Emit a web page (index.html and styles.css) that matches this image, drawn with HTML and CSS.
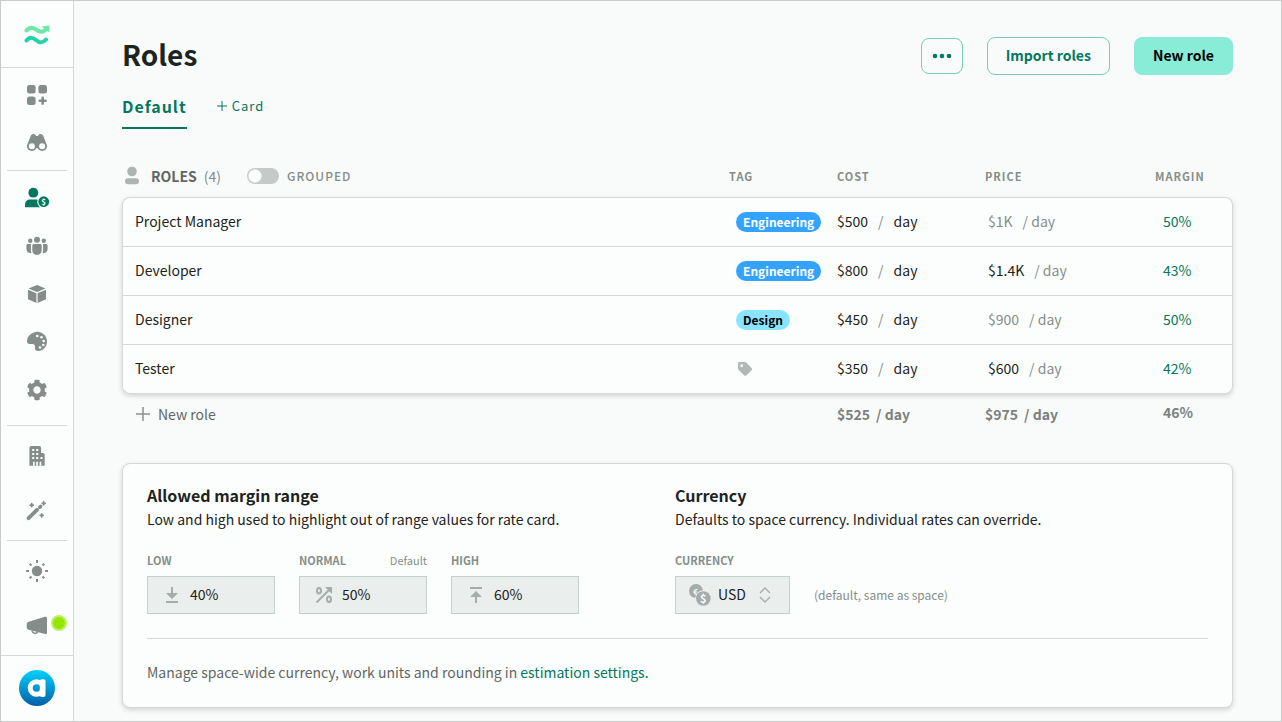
FILE: index.html
```html
<!DOCTYPE html>
<html lang="en">
  <head>
    <meta charset="utf-8">
    <title>Roles</title>
    <link rel="stylesheet" href="styles.css">
  </head>
  <body>
    <nav class="sidebar">
      <a class="logo" href="#" aria-label="Home">
        <svg width="26" height="24" viewBox="0 0 26 24" fill="none" stroke-width="4" stroke-linecap="round">
          <path d="M2.500 7.500C5.500 4 8.500 4 12 6.500S19 10 22 6.500" stroke="#6ee7a8"/>
          <path d="M17.500 3.500L25.500 2.500V9.500z" fill="#6ee7a8"/>
          <path d="M2.500 17.500C5.500 13.500 8.500 14 12 17S18.500 20.500 22 16.500" stroke="#22d3a9"/>
        </svg>
      </a>
      <div class="group">
        <a href="#" aria-label="Dashboard">
          <svg class="icon" viewBox="0 0 24 24"><rect x="2" y="2" width="8.600" height="8.600" rx="2.500"/><rect x="13.400" y="2" width="8.600" height="8.600" rx="2.500"/><rect x="2" y="13.400" width="8.600" height="8.600" rx="2.500"/><path d="M17.700 14.800v5.800M14.800 17.700h5.800" stroke="currentColor" stroke-width="2.600" stroke-linecap="round"/></svg>
        </a>
        <a href="#" aria-label="Explore">
          <svg class="icon" viewBox="0 0 24 24"><path d="M5.500 5.500C5.800 4 7 3 8.500 3S11 4 11 5h2c0-1 1-2 2.500-2s2.700 1 3 2.500L21.500 13c.3.700.5 1.400.5 2.200a4.900 4.900 0 0 1-9.300 2h-1.400a4.900 4.900 0 0 1-9.300-2c0-.8.2-1.500.5-2.200z"/><circle cx="6.900" cy="15.200" r="3" fill="#fcfefd"/><circle cx="17.100" cy="15.200" r="3" fill="#fcfefd"/></svg>
        </a>
      </div>
      <div class="group wide-end">
        <a class="active" href="#" aria-label="Roles">
          <svg class="icon" viewBox="0 0 24 24"><circle cx="8.300" cy="6.700" r="4.900"/><path d="M0 21.300V19c0-3.500 2-5.500 5-5.500h6.600c1 0 1.700.2 2.300.5l1.600 7.300z"/><circle cx="18.700" cy="15.700" r="6.500" fill="#fcfefd"/><circle cx="18.700" cy="15.700" r="5.400"/><text class="coin" x="18.700" y="18.900" text-anchor="middle">$</text></svg>
        </a>
        <a href="#" aria-label="Team">
          <svg class="icon" viewBox="0 0 24 24"><circle cx="12" cy="5.700" r="3"/><circle cx="5.200" cy="6.700" r="2.200"/><circle cx="18.800" cy="6.700" r="2.200"/><path d="M9 10h6c1 0 1.700.7 1.700 1.700v4.600c0 2.600-2 4.700-4.700 4.700s-4.700-2.100-4.700-4.700v-4.600C7.300 10.700 8 10 9 10zM3 10h3.300c-.3.500-.4 1-.4 1.700v4.600c0 1 .2 2 .6 2.900-2.900 0-5.100-1.500-5.100-4.500v-3C1.400 10.700 2 10 3 10zM21 10h-3.300c.3.500.4 1 .4 1.700v4.600c0 1-.2 2-.6 2.900 2.900 0 5.100-1.500 5.100-4.500v-3c0-1-.6-1.700-1.600-1.700z"/></svg>
        </a>
        <a href="#" aria-label="Products">
          <svg class="icon" viewBox="0 0 24 24"><path d="M12 3l8.500 3.400L12 10 3.500 6.400zM3 7.800l8.400 3.500V21L3 17.200zM21 7.800l-8.400 3.500V21l8.400-3.800z"/></svg>
        </a>
        <a href="#" aria-label="Themes">
          <svg class="icon" viewBox="0 0 24 24"><path d="M14.200 2C9.500 1 2 4.800 2 11.500c0 1.600 1.100 2.500 2.500 2.500h2.800c2 0 3.200 1.700 2.600 3.600-.5 2 1.200 3.400 3.300 3.400 5 0 8.800-4.300 8.800-9.500 0-4.800-3.300-8.600-7.800-9.500z"/><g fill="#fcfefd"><circle cx="12.300" cy="6" r="1.300"/><circle cx="16.500" cy="7.200" r="1.300"/><circle cx="18.700" cy="11" r="1.300"/><circle cx="18.300" cy="15" r="1.300"/><circle cx="15" cy="17.500" r="1.300"/></g></svg>
        </a>
        <a href="#" aria-label="Settings">
          <svg class="icon" viewBox="-37 -37 586 586"><path d="M487.400 315.700l-42.600-24.600c4.300-23.200 4.300-47 0-70.200l42.600-24.600c4.900-2.800 7.100-8.600 5.500-14-11.100-35.600-30-67.800-54.700-94.600-3.800-4.100-10-5.100-14.800-2.300L380.800 110c-17.900-15.400-38.500-27.300-60.800-35.100V25.800c0-5.600-3.900-10.500-9.400-11.700-36.700-8.200-74.300-7.800-109.200 0-5.500 1.200-9.400 6.100-9.400 11.700V75c-22.200 7.900-42.800 19.800-60.800 35.100L88.700 85.500c-4.900-2.800-11-1.900-14.800 2.300-24.700 26.700-43.600 58.900-54.700 94.600-1.700 5.400.6 11.200 5.500 14L67.300 221c-4.300 23.200-4.300 47 0 70.200l-42.600 24.600c-4.900 2.800-7.100 8.600-5.500 14 11.100 35.600 30 67.800 54.700 94.600 3.800 4.100 10 5.100 14.800 2.300l42.600-24.600c17.900 15.400 38.500 27.300 60.800 35.100v49.200c0 5.600 3.900 10.500 9.400 11.700 36.700 8.200 74.300 7.800 109.200 0 5.500-1.200 9.400-6.100 9.400-11.700v-49.200c22.200-7.900 42.800-19.800 60.800-35.100l42.600 24.600c4.900 2.800 11 1.900 14.800-2.300 24.700-26.700 43.600-58.900 54.700-94.600 1.500-5.500-.7-11.300-5.600-14.100zM256 346c-49.700 0-90-40.300-90-90s40.300-90 90-90 90 40.300 90 90-40.300 90-90 90z"/></svg>
        </a>
      </div>
      <div class="group tall">
        <a href="#" aria-label="Space">
          <svg class="icon" viewBox="0 0 24 24"><path d="M6.500 2h7.600c1.200 0 2 .8 2 2v5h1.600c1.200 0 2 .8 2 2v10.700H4.400V4c0-1.200.9-2 2.100-2z"/><path fill="#fcfefd" d="M7.200 5h2v2h-2zM11.200 5h2v2h-2zM7.200 9h2v2h-2zM11.200 9h2v2h-2zM7.200 13h2v2h-2zM11.200 13h2v2h-2zM15.500 13h2v2h-2zM8 17.700h1.700v4H8zM11.200 17.700h1.700v4h-1.700zM14.600 17.700h1.700v4h-1.700z"/></svg>
        </a>
        <a href="#" aria-label="Automations">
          <svg class="icon" viewBox="0 0 24 24" stroke="currentColor" stroke-linecap="round"><path d="M3.600 19.200L12 10.800" stroke-width="3.800"/><path d="M14.800 8.200l.8-.8" stroke-width="3.600"/><path d="M6.700 4.700v3M5.200 6.200h3M18.700 2.800v3M17.200 4.300h3M16.700 14.800v3M15.200 16.300h3" stroke-width="1.800"/></svg>
        </a>
      </div>
      <div class="group tall full">
        <a href="#" aria-label="Light theme">
          <svg class="icon" viewBox="0 0 24 24"><circle cx="12" cy="12" r="5.200"/><path d="M12 1v3M12 20v3M1 12h3M20 12h3M4.700 4.700l1.800 1.800M17.500 17.500l1.800 1.800M4.700 19.300l1.800-1.800M17.500 6.500l1.800-1.800" stroke="currentColor" stroke-width="2"/></svg>
        </a>
        <a class="news" href="#" aria-label="News">
          <svg class="icon" viewBox="0 0 24 24"><path d="M20 2.800c1.200-.3 2 .2 2 1.300v14.600c0 1-.8 1.500-2 1.200L3.700 15.700c-2-.5-2-1.800-2-2.900v-2.500c0-1 .3-2 2-2.500z"/><path d="M7 16.500c.3 3.300 4.800 3.800 5.700 1.300" fill="none" stroke="currentColor" stroke-width="1.500"/></svg>
          <span class="dot"></span>
        </a>
      </div>
      <a class="avatar" href="#" aria-label="Account">
        <svg width="36" height="36" viewBox="0 0 36 36">
          <defs><linearGradient id="blue" x1="0" y1="0" x2="0" y2="1"><stop offset="0" stop-color="#00d2fb"/><stop offset="1" stop-color="#005ea9"/></linearGradient></defs>
          <circle cx="18" cy="18" r="18" fill="url(#blue)"/>
          <circle cx="17.500" cy="18" r="6.300" fill="none" stroke="#fff" stroke-width="5"/>
          <rect x="20.800" y="9.300" width="5.700" height="17.700" rx="2" fill="#fff"/>
        </svg>
      </a>
    </nav>

    <main>
      <header class="page-header">
        <h1>Roles</h1>
        <button class="btn more" type="button" aria-label="More"><svg width="20" height="6" viewBox="0 0 20 6" fill="currentColor"><circle cx="3" cy="3" r="2.300"/><circle cx="10" cy="3" r="2.300"/><circle cx="17" cy="3" r="2.300"/></svg></button>
        <button class="btn" type="button">Import roles</button>
        <button class="btn primary" type="button">New role</button>
      </header>
      <div class="tabs">
        <a class="tab current" href="#">Default</a>
        <a class="tab add" href="#"><svg width="10" height="10" viewBox="0 0 10 10" stroke="currentColor"><path d="M5 0v10M0 5h10"/></svg>Card</a>
      </div>

      <table class="roles">
        <thead>
          <tr>
            <th>
              <div class="roles-title">
                <svg width="16" height="20" viewBox="0 0 16 20" fill="#aeb4b1"><circle cx="8" cy="5.500" r="4.800"/><rect x="1" y="12.300" width="14" height="6" rx="3"/></svg>
                <span>ROLES</span>
                <span class="count">(4)</span>
                <input class="switch" type="checkbox" id="grouped">
                <label for="grouped">GROUPED</label>
              </div>
            </th>
            <th class="tag-col">TAG</th>
            <th class="cost-col">COST</th>
            <th class="price-col">PRICE</th>
            <th class="margin-col">MARGIN</th>
          </tr>
        </thead>
        <tbody>
          <tr>
            <td>Project Manager</td>
            <td><span class="tag">Engineering</span></td>
            <td><div class="rate">$500 <i>/</i> day</div></td>
            <td><div class="rate price soft">$1K <span>/ day</span></div></td>
            <td>50%</td>
          </tr>
          <tr>
            <td>Developer</td>
            <td><span class="tag">Engineering</span></td>
            <td><div class="rate">$800 <i>/</i> day</div></td>
            <td><div class="rate price">$1.4K <span>/ day</span></div></td>
            <td>43%</td>
          </tr>
          <tr>
            <td>Designer</td>
            <td><span class="tag design">Design</span></td>
            <td><div class="rate">$450 <i>/</i> day</div></td>
            <td><div class="rate price soft">$900 <span>/ day</span></div></td>
            <td>50%</td>
          </tr>
          <tr>
            <td>Tester</td>
            <td><svg class="no-tag" width="18" height="16" viewBox="0 0 18 16"><path d="M3.500 1h5.300c.5 0 1 .2 1.400.6l5.300 5.300c.7.700.7 1.700 0 2.400l-5 5c-.7.700-1.700.7-2.400 0L2.600 9C2.200 8.600 2 8.100 2 7.600V2.500C2 1.700 2.700 1 3.500 1z" fill="#b3b8b6"/><circle cx="5.700" cy="4.700" r="1.400" fill="#fcfefd"/></svg></td>
            <td><div class="rate">$350 <i>/</i> day</div></td>
            <td><div class="rate price">$600 <span>/ day</span></div></td>
            <td>42%</td>
          </tr>
        </tbody>
        <tfoot>
          <tr>
            <td><button class="new-role" type="button"><svg width="14" height="14" viewBox="0 0 14 14" stroke="#8b918e" stroke-width="1.500"><path d="M7 0v14M0 7h14"/></svg>New role</button></td>
            <td></td>
            <td><div class="rate total">$525 <span>/ day</span></div></td>
            <td><div class="rate total">$975 <span>/ day</span></div></td>
            <td>46%</td>
          </tr>
        </tfoot>
      </table>

      <section class="settings">
        <div class="columns">
          <div>
            <h2>Allowed margin range</h2>
            <p>Low and high used to highlight out of range values for rate card.</p>
            <div class="fields">
              <div class="field">
                <div class="caption"><label for="low">LOW</label></div>
                <div class="box">
                  <svg width="24" height="20" viewBox="0 0 24 20" fill="#a6acaa"><path d="M11 2h2v6h5l-6 6-6-6h5zM6 16h12v2H6z"/></svg>
                  <input type="text" id="low" value="40%" readonly>
                </div>
              </div>
              <div class="field">
                <div class="caption"><label for="normal">NORMAL</label><span>Default</span></div>
                <div class="box">
                  <svg width="24" height="20" viewBox="0 0 24 20" fill="none" stroke="#a6acaa" stroke-width="2"><ellipse cx="7" cy="5.800" rx="2" ry="2.800"/><ellipse cx="17" cy="14.200" rx="2" ry="2.800"/><path d="M4.500 17.500L17 5"/><path d="M13 2h7v7z" fill="#a6acaa" stroke="none"/></svg>
                  <input type="text" id="normal" value="50%" readonly>
                </div>
              </div>
              <div class="field">
                <div class="caption"><label for="high">HIGH</label></div>
                <div class="box">
                  <svg width="24" height="20" viewBox="0 0 24 20" fill="#a6acaa"><path d="M6 2h12v2H6zM11 18h2v-6h5l-6-6-6 6h5z"/></svg>
                  <input type="text" id="high" value="60%" readonly>
                </div>
              </div>
            </div>
          </div>
          <div>
            <h2>Currency</h2>
            <p>Defaults to space currency. Individual rates can override.</p>
            <div class="caption"><label for="currency">CURRENCY</label></div>
            <div class="currency">
              <div class="box">
                <svg width="24" height="24" viewBox="0 0 24 24" fill="#a6acaa"><circle cx="8" cy="8" r="7"/><text class="coin euro" x="7.500" y="11.500" text-anchor="middle">€</text><circle cx="15.300" cy="15.500" r="8.200" fill="#eaeeec"/><circle cx="15.300" cy="15.500" r="7.300"/><text class="coin usd" x="15.300" y="19.500" text-anchor="middle">$</text></svg>
                <select id="currency"><option>USD</option></select>
                <svg width="12" height="16" viewBox="0 0 12 16" fill="none" stroke="#a6acaa" stroke-width="1.300"><path d="M1 6l5-5 5 5M1 10l5 5 5-5"/></svg>
              </div>
              <span class="hint">(default, same as space)</span>
            </div>
          </div>
        </div>
        <p class="note">Manage space-wide currency, work units and rounding in <a href="#">estimation settings.</a></p>
      </section>
    </main>
  </body>
</html>
```

FILE: styles.css
```css
* {
  box-sizing: border-box;
}
body {
  margin: 0;
  display: flex;
  min-height: 100vh;
  border: 1px solid #c9cbca;
  background-color: #f8fbfa;
  color: #1d2321;
  font: 14px/24px "Noto Sans CJK SC", "Noto Sans", sans-serif;
}
a {
  color: #04775f;
  text-decoration: none;
}
h1, h2, p {
  margin: 0;
}
button, input, select {
  font: inherit;
  color: inherit;
}
svg {
  flex: none;
}

/* sidebar */
.sidebar {
  flex: none;
  width: 73px;
  background-color: #fcfefd;
  border-right: 1px solid #d5d8d7;
}
.sidebar a {
  display: flex;
  align-items: center;
  justify-content: center;
  height: 48px;
  color: #858d8a;
}
.sidebar .logo {
  height: 67px;
  padding-top: 2px;
  border-bottom: 1px solid #d5d8d7;
}
.group {
  margin: 0 6px;
  padding: 3px 0;
  border-bottom: 1px solid #d5d8d7;
}
.wide-end {
  padding-bottom: 11px;
}
.tall {
  padding: 2px 0;
}
.sidebar .tall a {
  height: 55px;
}
.full {
  margin: 0;
}
.sidebar .active {
  color: #04775f;
}
.sidebar .avatar {
  height: 64px;
}
.icon {
  width: 24px;
  height: 24px;
  fill: currentColor;
}
.coin {
  fill: #fcfefd;
  font: bold 8px/8px "Noto Sans CJK SC", sans-serif;
}
.news {
  position: relative;
}
.dot {
  position: absolute;
  top: 17px;
  right: 6px;
  width: 16px;
  height: 16px;
  border: 2px solid #bdf06a;
  border-radius: 50%;
  background-color: #97e600;
}

/* page */
main {
  flex: 1;
  min-width: 0;
  padding: 36px 48px 13px;
}
.page-header {
  display: flex;
  align-items: center;
  gap: 24px;
}
h1 {
  flex: 1;
  padding-bottom: 4px;
  font-size: 28px;
  line-height: 34px;
  font-weight: 600;
}
.btn {
  height: 38px;
  padding: 0 18px 2px;
  border: 1px solid #76cdb7;
  border-radius: 8px;
  background: none;
  color: #04775f;
  font-weight: 600;
}
.more {
  display: flex;
  align-items: center;
  height: 36px;
  padding: 0 10px;
}
.primary {
  border-color: #88ecd6;
  background-color: #88ecd6;
  color: #000;
}
.tabs {
  display: flex;
  gap: 30px;
  margin-top: 19px;
}
.tab {
  display: flex;
  align-items: center;
  padding-bottom: 9px;
  border-bottom: 2px solid transparent;
  letter-spacing: 1px;
}
.current {
  border-color: #04775f;
  font-size: 16px;
  font-weight: 600;
}
.add {
  gap: 5px;
  font-size: 13px;
}

/* roles */
.roles {
  width: 100%;
  margin-top: 28px;
  border-spacing: 0;
  table-layout: fixed;
}
.roles th {
  height: 40px;
  padding: 0 0 2px;
  color: #858d8a;
  font-size: 11px;
  font-weight: bold;
  letter-spacing: 1px;
  text-align: left;
}
.tag-col {
  width: 108px;
}
.cost-col {
  width: 148px;
}
.price-col {
  width: 170px;
}
.margin-col {
  width: 78px;
}
.roles-title {
  display: flex;
  align-items: center;
  padding-left: 2px;
  color: #616664;
  font-size: 14px;
  letter-spacing: 0;
}
.roles-title svg {
  margin-right: 11px;
}
.count {
  margin-left: 7px;
  color: #858d8a;
  font-weight: normal;
}
.roles-title label {
  color: #858d8a;
  font-size: 12px;
  font-weight: 500;
  letter-spacing: 1px;
}
.switch {
  appearance: none;
  width: 32px;
  height: 16px;
  margin: 0 8px 0 26px;
  border-radius: 8px;
  background: radial-gradient(circle at 8px 8px, #fcfefd 6px, #c5c9c7 7px);
}
.roles tbody {
  border-radius: 8px;
  box-shadow: 0 2px 5px rgba(0, 0, 0, 0.16);
}
.roles tbody td {
  height: 49px;
  padding: 0 0 2px;
  border-top: 1px solid #d5d8d7;
  background-color: #fcfefd;
}
.roles tbody td:first-child {
  padding-left: 12px;
  border-left: 1px solid #d5d8d7;
}
.roles tbody td:nth-child(2) {
  padding: 0 0 0 7px;
}
.roles tbody td:last-child {
  padding-left: 8px;
  border-right: 1px solid #d5d8d7;
  color: #04775f;
}
.roles tbody tr:last-child td {
  height: 50px;
  border-bottom: 1px solid #d5d8d7;
}
.roles tbody tr:first-child td:first-child {
  border-top-left-radius: 8px;
}
.roles tbody tr:first-child td:last-child {
  border-top-right-radius: 8px;
}
.roles tbody tr:last-child td:first-child {
  border-bottom-left-radius: 8px;
}
.roles tbody tr:last-child td:last-child {
  border-bottom-right-radius: 8px;
}
.tag {
  display: table;
  padding: 0 7px;
  border-radius: 10px;
  background-color: #33a3ff;
  color: #fff;
  font-size: 12px;
  line-height: 20px;
  font-weight: 600;
}
.design {
  background-color: #88e4ff;
  color: #000;
}
.no-tag {
  display: block;
}
.rate {
  display: flex;
  gap: 10px;
}
.rate i {
  color: #858d8a;
  font-style: normal;
}
.price {
  padding-left: 3px;
}
.price span, .soft {
  color: #858d8a;
}
.total {
  gap: 6px;
}
.roles tfoot td {
  height: 42px;
  padding: 0 0 2px;
  color: #7a817e;
  font-weight: bold;
}
.roles tfoot td:last-child {
  padding: 0 0 6px 8px;
}
.new-role {
  display: flex;
  align-items: center;
  gap: 8px;
  padding: 0 0 0 14px;
  border: none;
  background: none;
  color: #616664;
  font-weight: normal;
}

/* settings card */
.settings {
  margin-top: 27px;
  padding: 19px 24px 23px;
  border: 1px solid #d5d8d7;
  border-radius: 8px;
  background-color: #fcfefd;
  box-shadow: 0 2px 5px rgba(0, 0, 0, 0.16);
}
.columns {
  display: grid;
  grid-template-columns: 480px 1fr;
  gap: 48px;
  padding-bottom: 24px;
  border-bottom: 1px solid #d5d8d7;
}
h2 {
  font-size: 16px;
  line-height: 24px;
  font-weight: 600;
}
.fields {
  display: flex;
  gap: 24px;
}
.field {
  width: 128px;
}
.caption {
  display: flex;
  justify-content: space-between;
  margin: 20px 0 7px;
  color: #858d8a;
  font-size: 11px;
  line-height: 18px;
}
.caption label {
  font-weight: bold;
}
.box {
  display: flex;
  align-items: center;
  gap: 6px;
  height: 38px;
  padding: 0 12px;
  border: 1px solid #c6d1ce;
  background-color: #eaeeec;
}
.box input, .box select {
  width: 100%;
  min-width: 0;
  padding: 0 0 2px;
  border: none;
  background: none;
}
.box select {
  appearance: none;
  width: 35px;
}
.currency {
  display: flex;
  align-items: center;
  gap: 24px;
}
.currency .box {
  padding-right: 18px;
}
.usd {
  font-size: 11px;
}
.hint {
  color: #858d8a;
  font-size: 12px;
}
.note {
  padding-top: 21px;
  color: #616664;
}
```
